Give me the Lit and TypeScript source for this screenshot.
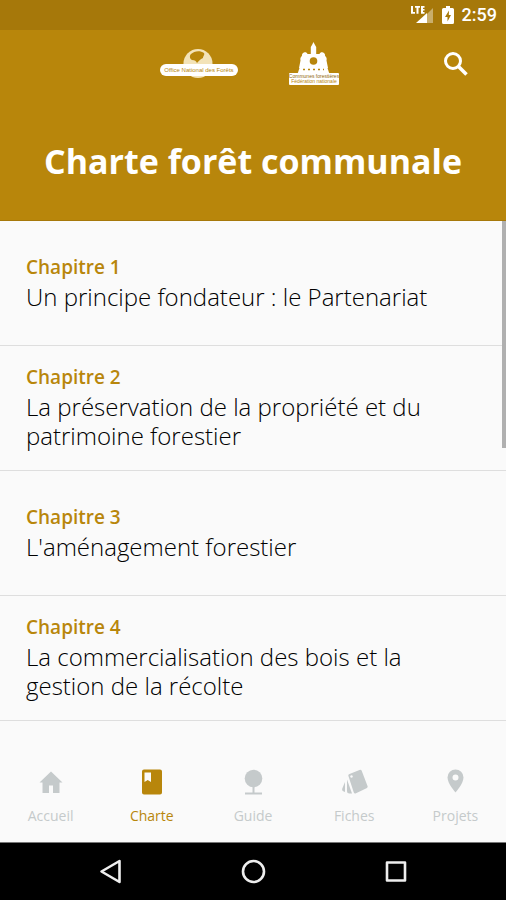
import { LitElement, html, css, svg } from "lit";
import { customElement, property, state } from "lit/decorators.js";
import { classMap } from "lit/directives/class-map.js";

interface Chapter {
  label: string;
  title: string;
}

const CHAPTERS: Chapter[] = [
  { label: "Chapitre 1", title: "Un principe fondateur : le Partenariat" },
  { label: "Chapitre 2", title: "La préservation de la propriété et du patrimoine forestier" },
  { label: "Chapitre 3", title: "L'aménagement forestier" },
  { label: "Chapitre 4", title: "La commercialisation des bois et la gestion de la récolte" },
];

const TABS = [
  { label: "Accueil", icon: svg`<path d="M14 3.5 2.5 14.500H5.500V25H12v-7.500h4V25h6.500V14.500h3z"/>` },
  {
    label: "Charte",
    icon: svg`<path fill-rule="evenodd" d="M6 1.500h16a2 2 0 0 1 2 2v21a2 2 0 0 1-2 2H6a2 2 0 0 1-2-2v-21a2 2 0 0 1 2-2zM6.500 4.500v9.500l3.200-2 3.300 2V4.500z"/>`,
  },
  {
    label: "Guide",
    icon: svg`<circle cx="14.500" cy="10.500" r="8.800"/><path d="M13.500 18h2v6.500H23v2H6v-2h7.500z"/>`,
  },
  {
    label: "Fiches",
    icon: svg`<path d="m9.500 6 10-4a1.800 1.800 0 0 1 2.300 1L27.500 18a1.800 1.800 0 0 1-1 2.300l-10.500 5a1.800 1.800 0 0 1-2.300-1L8.500 8.300a1.800 1.800 0 0 1 1-2.300z"/><path d="M7 11.500 12 25.500H9.500A2.500 2.500 0 0 1 7 23zM5 14v10l-1.800-.8a2 2 0 0 1-1-2.500z"/><circle class="hole" cx="11.500" cy="8.500" r="1.200"/>`,
  },
  {
    label: "Projets",
    icon: svg`<path fill-rule="evenodd" d="M14.500 1.500a8 8 0 0 0-8 8c0 6 8 15 8 15s8-9 8-15a8 8 0 0 0-8-8zm0 5a3 3 0 1 1 0 6 3 3 0 0 1 0-6z"/>`,
  },
];

@customElement("chapter-row")
class ChapterRow extends LitElement {
  @property() label = "";
  @property() heading = "";

  static styles = css`
    :host {
      display: block;
      border-bottom: 1px solid #dedede;
    }
    .row {
      display: flex;
      flex-direction: column;
      justify-content: center;
      box-sizing: border-box;
      min-height: 124px;
      padding: 14px 76px 18px 26px;
      color: #000;
      text-decoration: none;
    }
    .label {
      font-size: 19px;
      line-height: 30px;
      font-weight: 600;
      color: #b8860b;
    }
    .title {
      font-size: 24px;
      line-height: 29px;
      font-weight: 300;
    }
  `;

  render() {
    return html`
      <a class="row" href="#chapitre">
        <span class="label">${this.label}</span>
        <span class="title">${this.heading}</span>
      </a>
    `;
  }
}

@customElement("app-root")
class AppRoot extends LitElement {
  @state() private active = "Charte";

  static styles = css`
    :host {
      display: flex;
      flex-direction: column;
      min-height: 100vh;
      background: #fafafa;
      font-family: "Open Sans", "Noto Sans", sans-serif;
    }
    button {
      border: 0;
      padding: 0;
      background: none;
      font: inherit;
      cursor: pointer;
    }
    svg {
      display: block;
    }
    .status {
      display: flex;
      align-items: center;
      justify-content: flex-end;
      gap: 8px;
      height: 30px;
      padding-right: 9px;
      background: #a6780a;
      color: #fff;
      font: 500 18px/30px Roboto, sans-serif;
    }
    .header {
      background: #b8860b;
      color: #fff;
      padding-bottom: 35px;
      border-bottom: 1px solid #a6780a;
    }
    .toolbar {
      display: grid;
      grid-template-columns: 1fr auto 1fr;
      align-items: center;
      height: 67px;
      padding: 0 36px 0 28px;
    }
    .logos {
      display: flex;
      align-items: center;
      gap: 50px;
      grid-column: 2;
    }
    .search {
      justify-self: end;
    }
    h1 {
      margin: 0;
      padding: 40px 16px 0;
      text-align: center;
      font-size: 34px;
      line-height: 48px;
      font-weight: 700;
    }
    .onf {
      font: 400 6px "Liberation Sans", sans-serif;
    }
    .fncofor {
      font: 400 5px "Liberation Sans", sans-serif;
    }
    .content {
      position: relative;
      flex: 1;
    }
    .thumb {
      position: absolute;
      top: 0;
      right: 0;
      width: 4px;
      height: 227px;
      background: #b0b0b0;
    }
    .tabs {
      display: grid;
      grid-template-columns: repeat(5, 1fr);
      height: 121px;
      border-bottom: 1px solid #777;
    }
    .tab {
      display: flex;
      flex-direction: column;
      align-items: center;
      padding-top: 47px;
      gap: 8px;
      color: #c5cacb;
      fill: currentColor;
      font-size: 14px;
      line-height: 24px;
      font-weight: 400;
    }
    .tab.active {
      color: #b8860b;
    }
    .hole {
      fill: #fafafa;
    }
    .system {
      display: flex;
      justify-content: center;
      align-items: center;
      gap: 114px;
      height: 58px;
      background: #000;
    }
    .system svg {
      fill: none;
      stroke: #eee;
      stroke-width: 2.6;
      stroke-linejoin: round;
    }
  `;

  render() {
    return html`
      <div class="status">
        <svg width="23" height="20" viewBox="0 0 23 20" fill="#fff" aria-hidden="true">
          <path d="M0 1h2v6h2v1.800H0zM4 1h5v1.800H7.500v6h-2v-6H4zM10 1h3.500v1.700h-1.500v1.200h1.500v1.600h-1.500v1.500h1.500v1.800H10z" />
          <path d="M22 3v15h-6V9z" opacity=".4" />
          <path d="M16 8v10H5z" />
        </svg>
        <svg width="12" height="20" viewBox="0 0 12 20" aria-hidden="true">
          <path fill="#fff" d="M4 1h4v2h2.500A1.500 1.500 0 0 1 12 4.500v13a1.500 1.500 0 0 1-1.500 1.500h-9A1.500 1.500 0 0 1 0 17.500v-13A1.500 1.500 0 0 1 1.500 3H4z" />
          <path fill="#a6780a" d="M7 5.500 3 12h2.500v4.500L9 10H6.800z" />
        </svg>
        <span>2:59</span>
      </div>

      <header class="header">
        <div class="toolbar">
          <div class="logos">
            <svg width="80" height="32" viewBox="0 0 80 32" role="img" aria-label="Office National des Forêts">
              <circle cx="39" cy="15.500" r="14.500" fill="#f3e3b8" />
              <path fill="#b8860b" d="M32 6c3-3 9-4 13-1 1 2-1 3-1 5-3 1-4 3-6 5-1-2-2-3-5-3-2-1-3-4-1-6z" />
              <rect x="1" y="16" width="78" height="12" rx="6" fill="#fff" />
              <text class="onf" x="40" y="24" text-anchor="middle" fill="#b8860b">Office National des Forêts</text>
            </svg>
            <svg width="50" height="46" viewBox="0 0 50 46" role="img" aria-label="Communes forestières">
              <path fill="#fff" d="M24.500 1 26 4l1.200 2v7h3.300c.5-1.500 2-2 3.500-1.500s2.500 2 2 3.500c1.500 1 2 2.500 1.500 4.500l1.500 7.500H10l1.500-7.500c-.5-2 0-3.500 1.500-4.500-.5-1.500.5-3 2-3.500s3 0 3.500 1.500h3.300V6L23 4z" />
              <circle cx="24.500" cy="20" r="3.800" fill="#b8860b" />
              <path fill="#fff" d="M10.500 27h28l2 6H8.500z" />
              <path stroke="#b8860b" stroke-width="1.500" stroke-dasharray="2 3" d="M14 28.500h21" />
              <rect y="32" width="50" height="12" rx="1" fill="#fff" />
              <text class="fncofor" x="25" y="37" text-anchor="middle" fill="#8f680c">Communes forestières</text>
              <text class="fncofor" x="25" y="42" text-anchor="middle" fill="#b8860b">Fédération nationale</text>
            </svg>
          </div>
          <button class="search" aria-label="Rechercher">
            <svg width="28" height="28" viewBox="0 0 28 28" fill="none" stroke="#fff" stroke-width="3">
              <circle cx="11" cy="11" r="7.500" />
              <path d="m16.500 16.500 8 8" stroke-width="3.600" />
            </svg>
          </button>
        </div>
        <h1>Charte forêt communale</h1>
      </header>

      <main class="content">
        ${CHAPTERS.map((c) => html`<chapter-row .label=${c.label} .heading=${c.title}></chapter-row>`)}
        <div class="thumb"></div>
      </main>

      <nav class="tabs">
        ${TABS.map(
          (t) => html`
            <button
              class=${classMap({ tab: true, active: t.label === this.active })}
              @click=${() => (this.active = t.label)}
            >
              <svg width="28" height="28" viewBox="0 0 28 28" aria-hidden="true">${t.icon}</svg>
              <span>${t.label}</span>
            </button>
          `
        )}
      </nav>

      <div class="system">
        <button aria-label="Retour">
          <svg width="28" height="28" viewBox="0 0 28 28"><path d="M22.500 3v21L4.500 13.500z" /></svg>
        </button>
        <button aria-label="Accueil du téléphone">
          <svg width="28" height="28" viewBox="0 0 28 28"><circle cx="14.500" cy="13.500" r="10.500" /></svg>
        </button>
        <button aria-label="Applications récentes">
          <svg width="28" height="28" viewBox="0 0 28 28"><path d="M6 4.500h18v18H6z" /></svg>
        </button>
      </div>
    `;
  }
}
